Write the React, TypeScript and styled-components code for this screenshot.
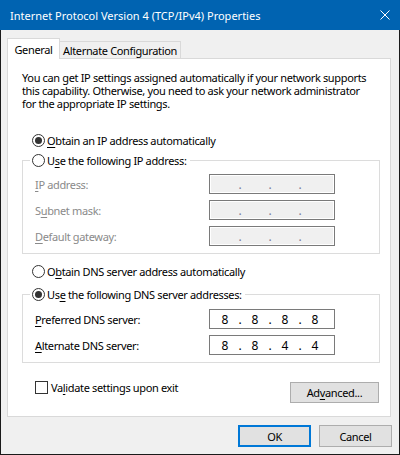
import React from "react";
import styled, { createGlobalStyle } from "styled-components";

const FONT = `"Noto Sans", "Open Sans", "DejaVu Sans", sans-serif`;

const Global = createGlobalStyle`
  html, body { margin: 0; padding: 0; background: #f0f0f0; }
  body { font-family: ${FONT}; font-size: 11px; color: #000; }
  * { box-sizing: border-box; }
`;

const Window = styled.div`
  width: 400px;
  height: 455px;
  display: flex;
  flex-direction: column;
  background: #f0f0f0;
`;

const TitleBar = styled.div`
  height: 30px;
  flex: none;
  background: #0063b1;
  color: #fff;
  display: flex;
  align-items: center;
  justify-content: space-between;
  padding-left: 10px;
`;

const Title = styled.span`
  font-size: 11px;
  white-space: nowrap;
`;

const CloseButton = styled.div`
  width: 30px;
  height: 30px;
  display: flex;
  align-items: center;
  justify-content: center;
`;

const Body = styled.div`
  flex: 1;
  border: 1px solid #1a1a1a;
  border-top: none;
  padding: 8px 7px 0 6px;
  display: flex;
  flex-direction: column;
  letter-spacing: -0.35px;
`;

const TabRow = styled.div`
  display: flex;
  align-items: flex-end;
  height: 21px;
  margin-bottom: -1px;
  position: relative;
  z-index: 1;
`;

const Tab = styled.div<{ $active?: boolean }>`
  display: flex;
  align-items: center;
  justify-content: center;
  white-space: nowrap;
  border: 1px solid #d9d9d9;
  border-bottom: none;
  background: ${(p) => (p.$active ? "#fff" : "#f0f0f0")};
  height: ${(p) => (p.$active ? "21px" : "17px")};
  margin-bottom: ${(p) => (p.$active ? "0" : "1px")};
  width: ${(p) => (p.$active ? "53px" : "121px")};
  ${(p) => (p.$active ? "" : "border-left: none;")}
`;

const Panel = styled.div`
  width: 384px;
  height: 359px;
  flex: none;
  border: 1px solid #d9d9d9;
  background: #fff;
  padding: 12px 0 0 14px;
  display: flex;
  flex-direction: column;
`;

const Description = styled.p`
  margin: 0;
  line-height: 13px;
  white-space: nowrap;
`;

const RadioRow = styled.label<{ $mt?: number }>`
  display: flex;
  align-items: center;
  gap: 2px;
  height: 16px;
  padding-left: 10px;
  margin-top: ${(p) => p.$mt ?? 0}px;
  white-space: nowrap;
`;

const RadioCircle = styled.span<{ $checked?: boolean }>`
  width: 13px;
  height: 13px;
  border-radius: 50%;
  border: 1px solid #333;
  background: #fff;
  display: flex;
  align-items: center;
  justify-content: center;
  flex: none;
  &::after {
    content: "";
    width: 7px;
    height: 7px;
    border-radius: 50%;
    background: ${(p) => (p.$checked ? "#333" : "transparent")};
  }
`;

const Group = styled.fieldset<{ $mt: number; $pt: number }>`
  margin: ${(p) => p.$mt}px 0 0 0;
  width: 358px;
  border: 1px solid #dcdcdc;
  padding: ${(p) => p.$pt}px 0 7px 0;
  min-width: 0;
`;

const Legend = styled.legend`
  margin-left: 7px;
  padding: 0 3px 0 0;
  background: #fff;
`;

const LegendRow = styled(RadioRow)`
  padding-left: 2px;
`;

const FieldGrid = styled.div`
  display: grid;
  grid-template-columns: 174px 126px;
  grid-auto-rows: 20px;
  row-gap: 6px;
  padding-left: 12px;
  align-items: center;
`;

const FieldLabel = styled.span<{ $disabled?: boolean }>`
  color: ${(p) => (p.$disabled ? "#8a8a8a" : "#000")};
  white-space: nowrap;
`;

const IpBox = styled.div<{ $disabled?: boolean }>`
  height: 20px;
  border: 1px solid #7a7a7a;
  background: ${(p) => (p.$disabled ? "#f0f0f0" : "#fff")};
  box-shadow: ${(p) => (p.$disabled ? "inset 0 0 0 1px #fff" : "none")};
  display: flex;
  align-items: center;
  padding-left: 3px;
  font-size: 12px;
  letter-spacing: 0;
  color: ${(p) => (p.$disabled ? "#7a7a9a" : "#000")};
`;

const Octet = styled.span`
  width: 24px;
  text-align: center;
`;

const Dot = styled.span`
  width: 6px;
  text-align: center;
`;

const BottomRow = styled.div`
  width: 358px;
  margin-top: 18px;
  display: flex;
  justify-content: space-between;
  align-items: flex-start;
  padding: 0 1px 0 13px;
`;

const CheckLabel = styled.label`
  display: flex;
  align-items: center;
  gap: 3px;
  height: 13px;
  white-space: nowrap;
`;

const CheckBox = styled.span`
  width: 13px;
  height: 13px;
  border: 1px solid #333;
  background: #fff;
  flex: none;
`;

const Button = styled.div<{ $w: number; $h: number; $default?: boolean }>`
  width: ${(p) => p.$w}px;
  height: ${(p) => p.$h}px;
  background: #e1e1e1;
  border: ${(p) => (p.$default ? "2px solid #0078d7" : "1px solid #adadad")};
  display: flex;
  align-items: center;
  justify-content: center;
  white-space: nowrap;
`;

const AdvancedButton = styled(Button)`
  margin-top: 1px;
`;

const Footer = styled.div`
  display: flex;
  justify-content: flex-end;
  gap: 8px;
  margin-top: 8px;
`;

const Key = styled.span`
  text-decoration: underline;
  text-underline-offset: 2px;
`;

function IpField({ values, disabled }: { values?: string[]; disabled?: boolean }) {
  const v = values ?? ["", "", "", ""];
  return (
    <IpBox $disabled={disabled}>
      {v.map((o, i) => (
        <React.Fragment key={i}>
          {i > 0 && <Dot>.</Dot>}
          <Octet>{o}</Octet>
        </React.Fragment>
      ))}
    </IpBox>
  );
}

export default function App() {
  return (
    <>
      <Global />
      <Window>
        <TitleBar>
          <Title>Internet Protocol Version 4 (TCP/IPv4) Properties</Title>
          <CloseButton>
            <svg width="10" height="10" viewBox="0 0 10 10">
              <path d="M0.5 0.5 L9.5 9.5 M9.5 0.5 L0.5 9.5" stroke="#fff" strokeWidth="1" fill="none" />
            </svg>
          </CloseButton>
        </TitleBar>
        <Body>
          <TabRow>
            <Tab $active>General</Tab>
            <Tab>Alternate Configuration</Tab>
          </TabRow>
          <Panel>
            <Description>
              You can get IP settings assigned automatically if your network supports
              <br />
              this capability. Otherwise, you need to ask your network administrator
              <br />
              for the appropriate IP settings.
            </Description>
            <RadioRow $mt={22}>
              <RadioCircle $checked />
              <span>
                <Key>O</Key>btain an IP address automatically
              </span>
            </RadioRow>
            <Group $mt={4} $pt={6}>
              <Legend>
                <LegendRow>
                  <RadioCircle />
                  <span>
                    U<Key>s</Key>e the following IP address:
                  </span>
                </LegendRow>
              </Legend>
              <FieldGrid>
                <FieldLabel $disabled>
                  <Key>I</Key>P address:
                </FieldLabel>
                <IpField disabled />
                <FieldLabel $disabled>
                  S<Key>u</Key>bnet mask:
                </FieldLabel>
                <IpField disabled />
                <FieldLabel $disabled>
                  <Key>D</Key>efault gateway:
                </FieldLabel>
                <IpField disabled />
              </FieldGrid>
            </Group>
            <RadioRow $mt={9}>
              <RadioCircle />
              <span>
                O<Key>b</Key>tain DNS server address automatically
              </span>
            </RadioRow>
            <Group $mt={7} $pt={7}>
              <Legend>
                <LegendRow>
                  <RadioCircle $checked />
                  <span>
                    Us<Key>e</Key> the following DNS server addresses:
                  </span>
                </LegendRow>
              </Legend>
              <FieldGrid>
                <FieldLabel>
                  <Key>P</Key>referred DNS server:
                </FieldLabel>
                <IpField values={["8", "8", "8", "8"]} />
                <FieldLabel>
                  <Key>A</Key>lternate DNS server:
                </FieldLabel>
                <IpField values={["8", "8", "4", "4"]} />
              </FieldGrid>
            </Group>
            <BottomRow>
              <CheckLabel>
                <CheckBox />
                <span>
                  Va<Key>l</Key>idate settings upon exit
                </span>
              </CheckLabel>
              <AdvancedButton $w={89} $h={21}>
                <span>
                  Ad<Key>v</Key>anced...
                </span>
              </AdvancedButton>
            </BottomRow>
          </Panel>
          <Footer>
            <Button $w={73} $h={22} $default>
              OK
            </Button>
            <Button $w={73} $h={22}>
              Cancel
            </Button>
          </Footer>
        </Body>
      </Window>
    </>
  );
}
